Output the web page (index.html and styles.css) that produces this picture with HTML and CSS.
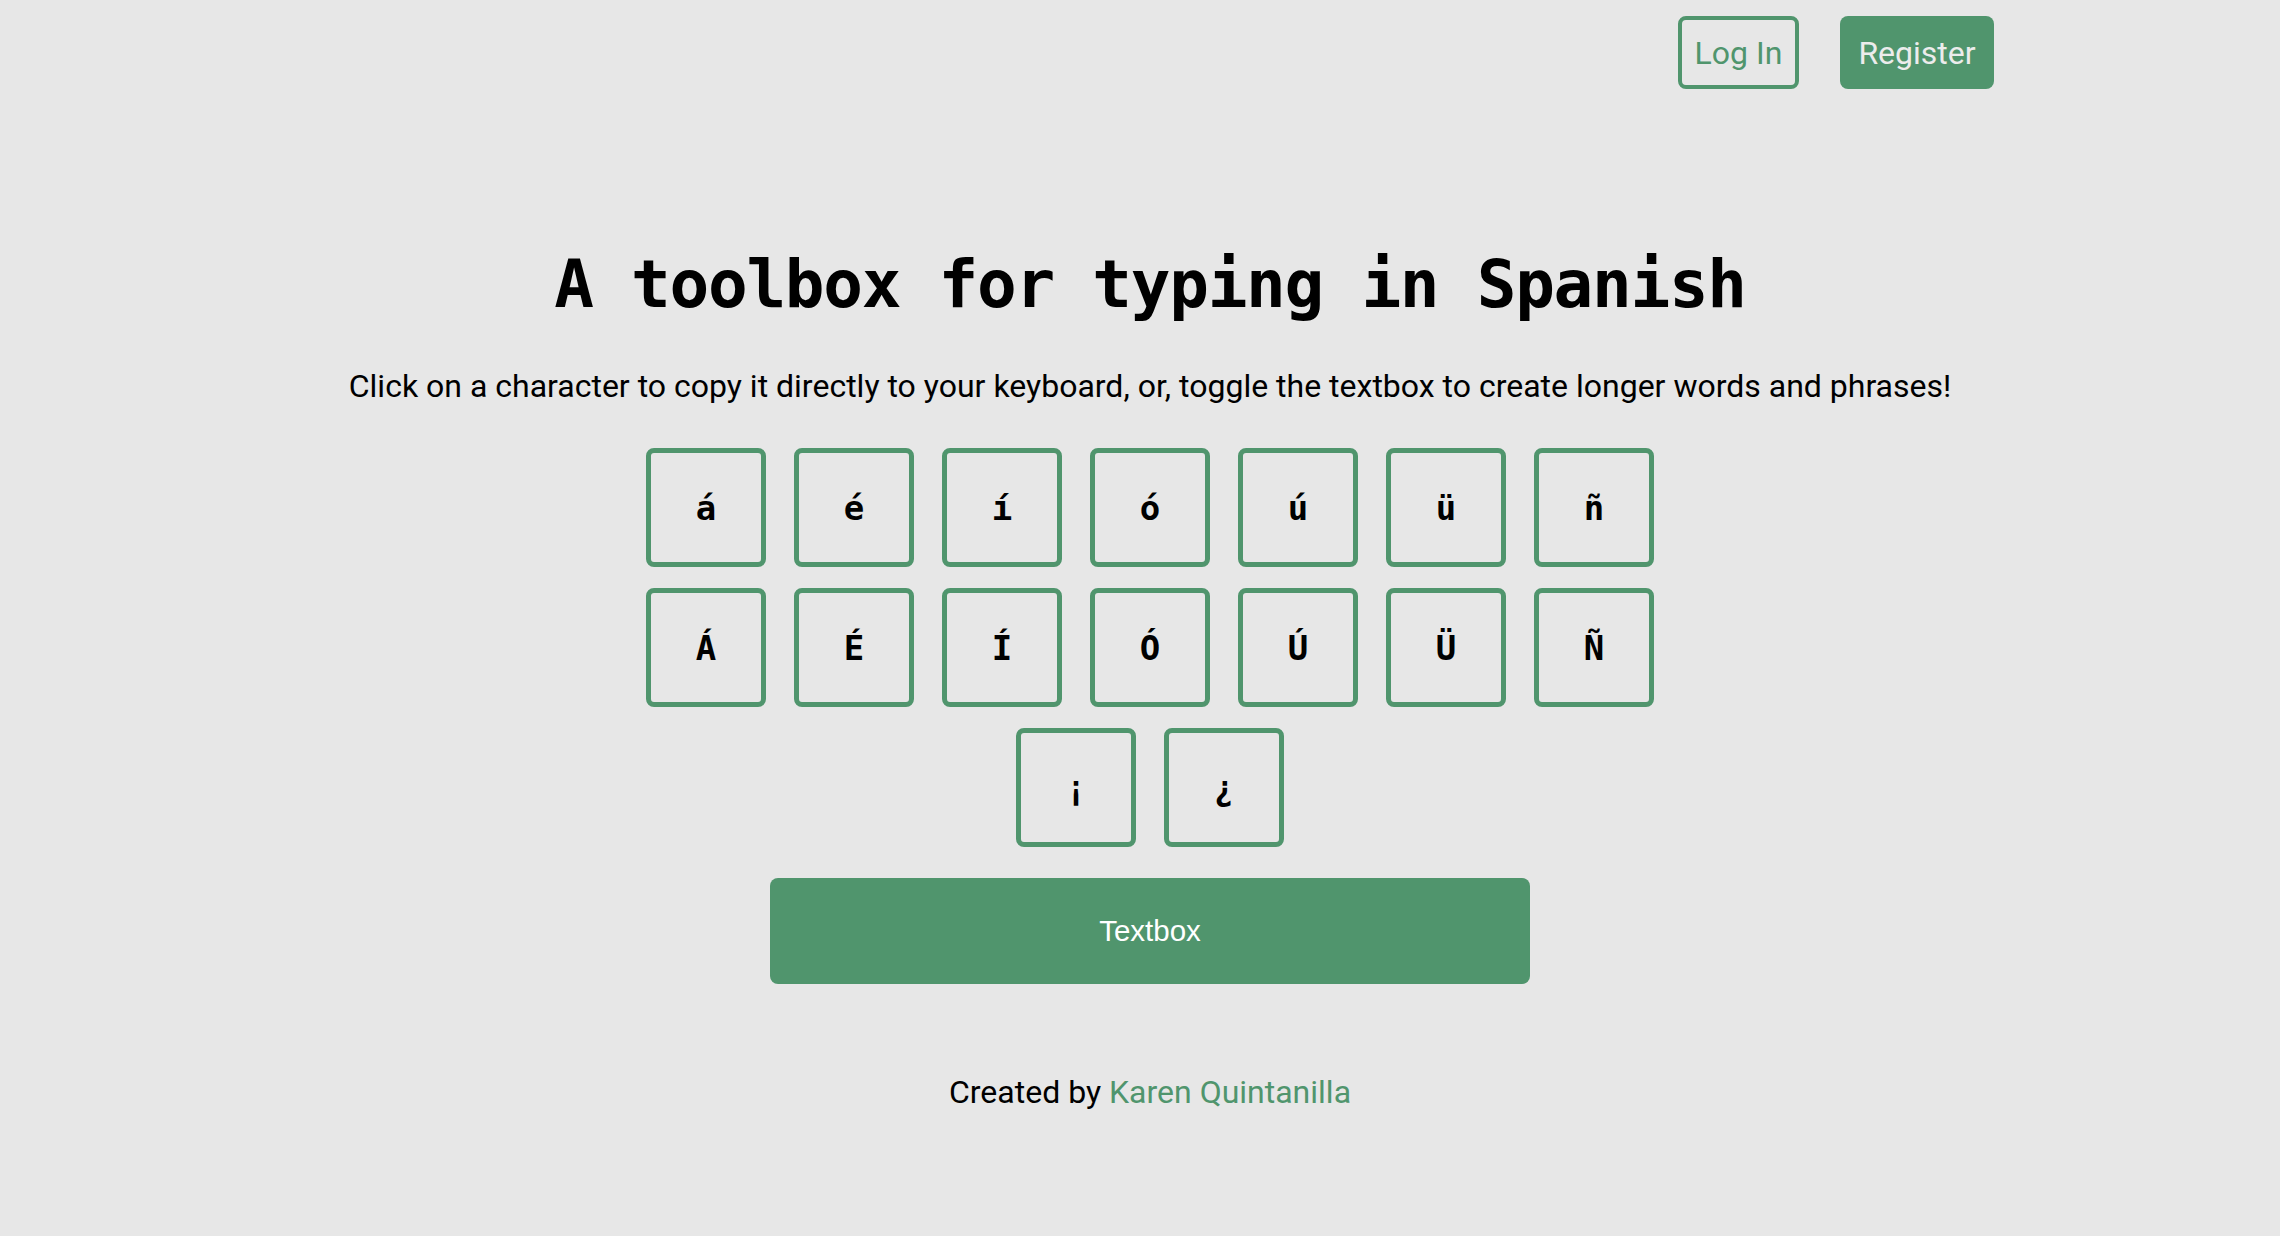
FILE: index.html
```html
<!DOCTYPE html>
<html lang="en">
<head>
<meta charset="utf-8">
<title>Spanish Toolbox</title>
<link rel="stylesheet" href="styles.css">
</head>
<body>
<div class="page">
  <header class="topbar">
    <a class="btn btn-outline" href="#">Log In</a>
    <a class="btn btn-solid" href="#">Register</a>
  </header>
  <main class="main">
    <h1 class="title">A toolbox for typing in Spanish</h1>
    <p class="subtitle">Click on a character to copy it directly to your keyboard, or, toggle the textbox to create longer words and phrases!</p>
    <div class="keys">
      <div class="key-row">
        <button class="key">á</button>
        <button class="key">é</button>
        <button class="key">í</button>
        <button class="key">ó</button>
        <button class="key">ú</button>
        <button class="key">ü</button>
        <button class="key">ñ</button>
      </div>
      <div class="key-row">
        <button class="key">Á</button>
        <button class="key">É</button>
        <button class="key">Í</button>
        <button class="key">Ó</button>
        <button class="key">Ú</button>
        <button class="key">Ü</button>
        <button class="key">Ñ</button>
      </div>
      <div class="key-row">
        <button class="key">¡</button>
        <button class="key">¿</button>
      </div>
    </div>
    <button class="textbox-btn">Textbox</button>
    <footer class="footer">Created by <a class="footer-link" href="#">Karen Quintanilla</a></footer>
  </main>
</div>
</body>
</html>
```

FILE: styles.css
```css
html, body {
  margin: 0;
  padding: 0;
}
body {
  background: #e7e7e7;
  color: #000;
  font-family: Roboto, "Liberation Sans", sans-serif;
  min-height: 1236px;
}
.page {
  padding: 0 286px 0 306px;
}
.topbar {
  display: flex;
  justify-content: flex-end;
  align-items: center;
  gap: 41px;
  padding-top: 16px;
}
.btn {
  box-sizing: border-box;
  height: 73px;
  display: flex;
  align-items: center;
  justify-content: center;
  border-radius: 8px;
  font-family: Roboto, sans-serif;
  font-size: 32px;
  text-decoration: none;
}
.btn-outline {
  width: 121px;
  border: 4px solid #50956d;
  color: #50956d;
}
.btn-solid {
  width: 154px;
  background: #50956d;
  color: #ececec;
}
.main {
  display: flex;
  flex-direction: column;
  align-items: center;
}
.title {
  margin: 163px 0 0;
  font-family: "DejaVu Sans Mono", monospace;
  font-weight: bold;
  font-size: 66px;
  line-height: 66px;
  letter-spacing: -1.3px;
}
.subtitle {
  margin: 49px 0 0;
  font-family: Roboto, sans-serif;
  font-size: 32px;
  line-height: 38px;
}
.keys {
  margin-top: 43px;
  display: flex;
  flex-direction: column;
  align-items: center;
  gap: 21px;
}
.key-row {
  display: flex;
  gap: 28px;
}
.key {
  box-sizing: border-box;
  width: 120px;
  height: 119px;
  border: 5px solid #50956d;
  border-radius: 8px;
  background: transparent;
  font-family: "DejaVu Sans Mono", monospace;
  font-weight: bold;
  font-size: 34px;
  color: #000;
  padding: 0;
  display: flex;
  align-items: center;
  justify-content: center;
}
.textbox-btn {
  margin-top: 31px;
  width: 760px;
  height: 106px;
  border: none;
  border-radius: 8px;
  background: #50956d;
  color: #fff;
  font-family: "Liberation Sans", Arial, sans-serif;
  font-size: 29.5px;
}
.footer {
  margin-top: 89px;
  font-family: Roboto, sans-serif;
  font-size: 32px;
  line-height: 38px;
}
.footer-link {
  color: #50956d;
  text-decoration: none;
}
```
